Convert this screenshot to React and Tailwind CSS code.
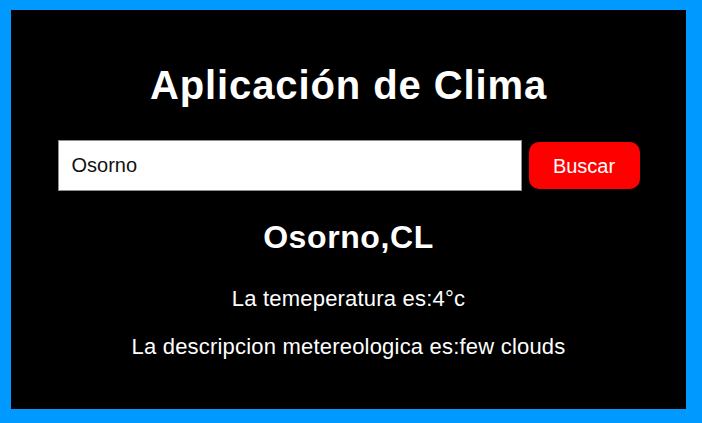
export default function App() {
  const font = { fontFamily: '"Liberation Sans", Arial, sans-serif' };
  return (
    <div className="w-[702px] h-[423px] bg-[#0099ff] pt-[10px] pl-[11px]" style={font}>
      <div className="w-[675px] h-[399px] bg-black flex flex-col items-center pt-[52px] text-white font-['Liberation_Sans',Arial,sans-serif]">
        <h1 className="text-[40px] leading-[46px] font-bold tracking-[0.9px]">Aplicación de Clima</h1>
        <div className="mt-[32px] w-[582px] flex items-center gap-[7px]">
          <input
            className="w-[464px] h-[51px] bg-white border border-[#8f8f8f] pl-[13px] text-[20px] text-[#111] outline-none font-['Liberation_Sans',Arial,sans-serif]"
            defaultValue="Osorno"
          />
          <button className="w-[111px] h-[47px] bg-[#ff0000] rounded-[10px] text-white text-[20px] font-['Liberation_Sans',Arial,sans-serif]">
            Buscar
          </button>
        </div>
        <h2 className="mt-[28px] text-[32px] leading-[37px] font-bold tracking-[0.6px]">Osorno,CL</h2>
        <p className="mt-[30px] text-[22px] leading-[25px] tracking-[0.2px]">La temeperatura es:4°c</p>
        <p className="mt-[23px] text-[22px] leading-[25px] tracking-[0.2px]">La descripcion metereologica es:few clouds</p>
      </div>
    </div>
  );
}
